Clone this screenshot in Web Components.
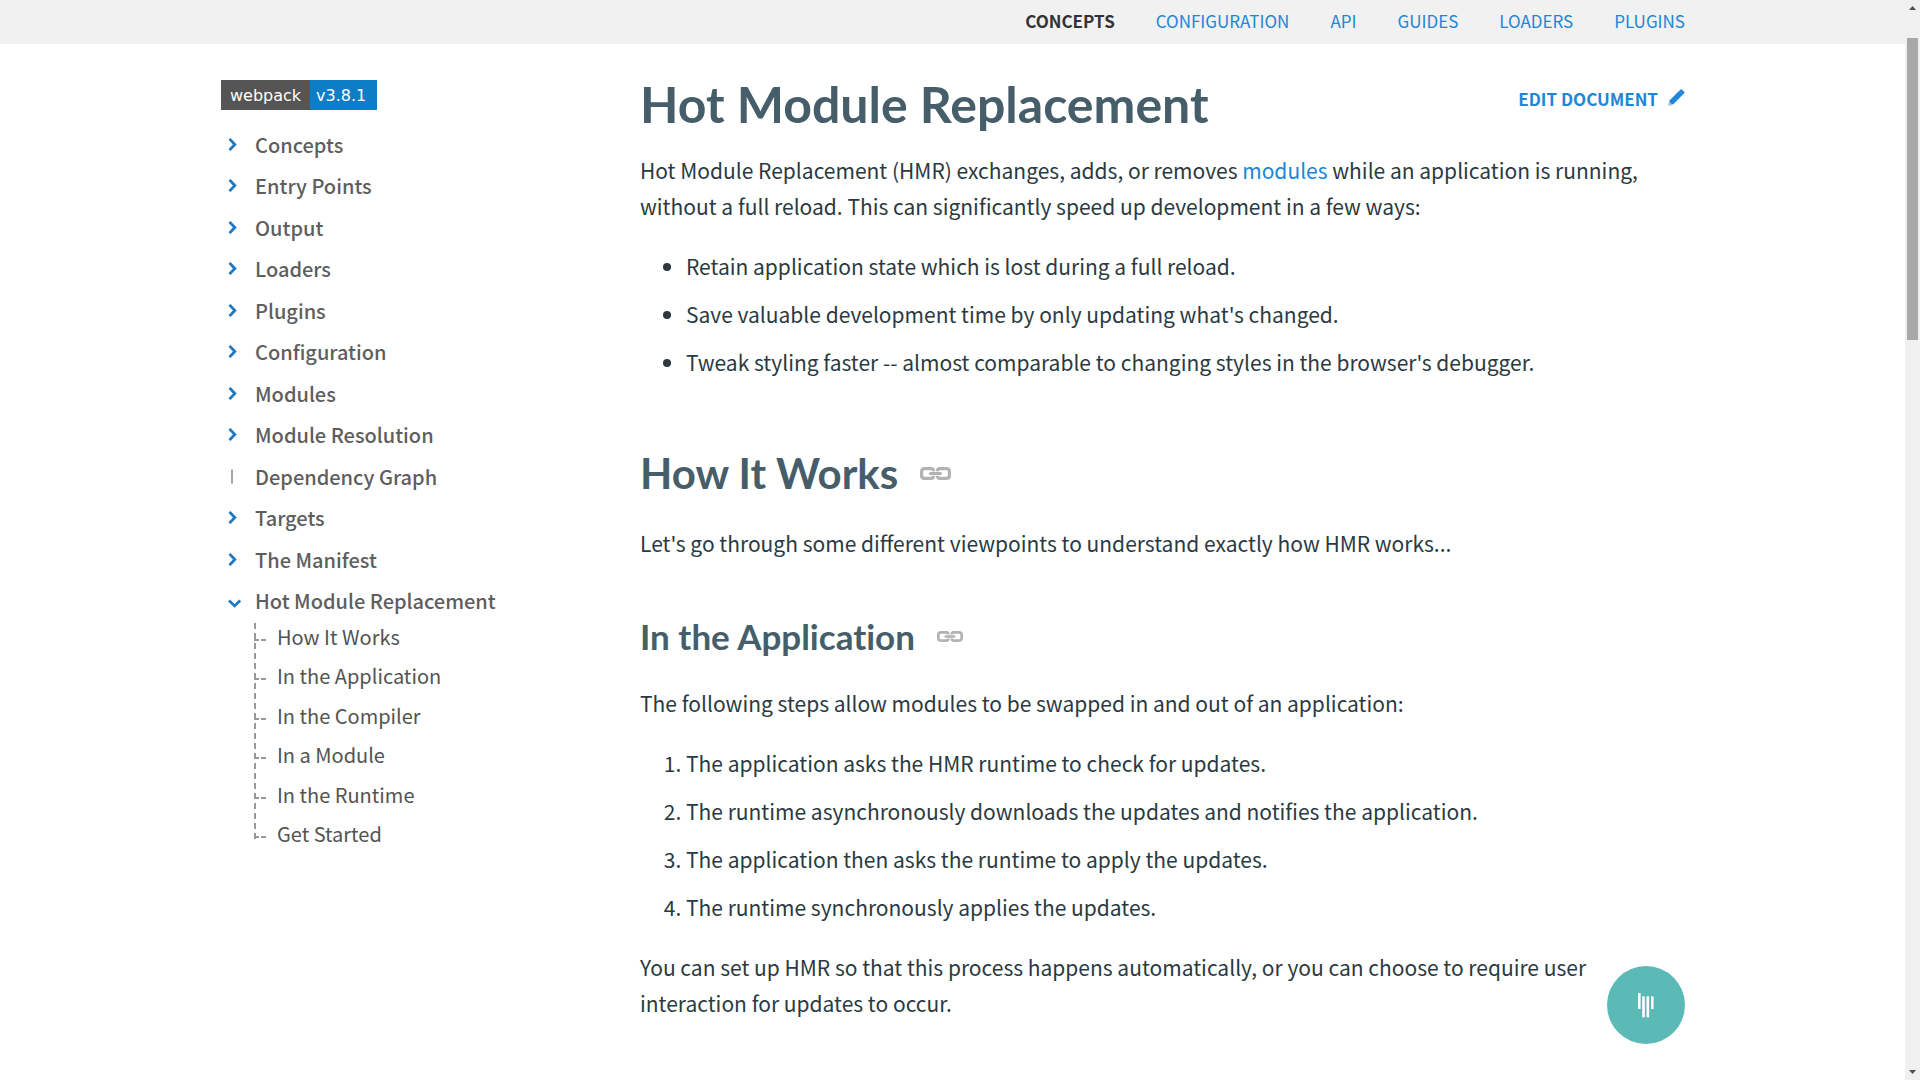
<!DOCTYPE html>
<html lang="en">
<head>
<meta charset="utf-8">
<title>Hot Module Replacement</title>
<style>
  html, body { margin: 0; }
  body {
    font: 400 21px/36px "Noto Sans CJK SC", "Open Sans", sans-serif;
    color: #2b3a42;
    background: #fff;
  }
</style>
</head>
<body>
<docs-page></docs-page>

<script>
const define = (name, html, setup) => {
  const template = document.createElement('template');
  template.innerHTML = html;
  customElements.define(name, class extends HTMLElement {
    connectedCallback() {
      if (this.shadowRoot) return;
      const root = this.attachShadow({ mode: 'open' });
      root.append(template.content.cloneNode(true));
      if (setup) setup(this, root);
    }
  });
};

define('site-nav', `
  <style>
    :host { display: block; background: #f1f1f1; }
    nav {
      display: flex; justify-content: flex-end; gap: 41px;
      max-width: 1465px; margin: 0 auto; padding-bottom: 2px;
      font-size: 17px; line-height: 42px; text-transform: uppercase;
    }
    a { color: #2086d7; text-decoration: none; }
    a[aria-current] { color: #333; font-weight: 600; }
  </style>
  <nav aria-label="Sections">
    <a href="#concepts" aria-current="page">Concepts</a>
    <a href="#configuration">Configuration</a>
    <a href="#api">API</a>
    <a href="#guides">Guides</a>
    <a href="#loaders">Loaders</a>
    <a href="#plugins">Plugins</a>
  </nav>`);

define('version-badge', `
  <style>
    :host { display: flex; height: 30px; font: 16px/32px "DejaVu Sans", sans-serif; color: #fff; }
    .name { box-sizing: border-box; width: 89px; padding-left: 9px; background: #555; }
    .version { box-sizing: border-box; width: 67px; padding-left: 6px; background: #0f7dc6; }
  </style>
  <span class="name"><slot name="name"></slot></span>
  <span class="version"><slot></slot></span>`);

define('toggle-mark', `
  <style>
    :host { display: block; width: 34px; height: 41px; }
    svg { display: block; width: 33px; height: 41px; fill: none; }
    .arrow { stroke: #1d78c1; stroke-width: 2.8; }
    .bar { stroke: #999; stroke-width: 1.8; }
    path { display: none; }
    :host([kind="closed"]) .closed, :host([kind="open"]) .open, :host([kind="none"]) .bar { display: inline; }
  </style>
  <svg viewBox="0 0 33 41" aria-hidden="true">
    <path class="arrow closed" d="M8.5 14.9 L13.8 20.5 L8.5 26.1"/>
    <path class="arrow open" d="M8 20.6 L13.6 25.9 L19.2 20.6"/>
    <path class="bar" d="M11 13.5 V27.5"/>
  </svg>`);

define('side-nav', `
  <style>
    :host { display: block; padding: 36px 0 0 1px; }
    ul { list-style: none; margin: 0; padding: 0; }
    a { color: inherit; text-decoration: none; }
    .tree { margin-top: 14px; font-size: 20px; }
    .tree > li:nth-child(even) > .row { padding-bottom: 1px; }
    .row { display: flex; line-height: 41px; font-weight: 500; color: #5e5e5e; }
    .anchors { position: relative; margin: 1px 0 0 33px; padding-left: 23px; line-height: 28px; color: #535353; }
    .anchors::before {
      content: ""; position: absolute; left: 0; top: 0; bottom: 9px;
      border-left: 2px dashed #999;
    }
    .anchors li { position: relative; margin-bottom: 11px; }
    .anchors li:nth-child(even) { margin-bottom: 12px; }
    .anchors li:last-child { margin-bottom: 0; }
    .anchors li::before {
      content: ""; position: absolute; left: -23px; top: 16px; width: 12px; height: 2px;
      background: repeating-linear-gradient(90deg, #999 0 5px, transparent 5px 7px);
    }
  </style>
  <version-badge><span slot="name">webpack</span>v3.8.1</version-badge>
  <nav aria-label="Concepts"><ul class="tree"></ul></nav>`,
  (host, root) => {
    const tree = root.querySelector('.tree');
    const pages = ['Concepts', 'Entry Points', 'Output', 'Loaders', 'Plugins', 'Configuration', 'Modules',
      'Module Resolution', 'Dependency Graph', 'Targets', 'The Manifest', 'Hot Module Replacement'];
    const anchors = ['How It Works', 'In the Application', 'In the Compiler', 'In a Module', 'In the Runtime', 'Get Started'];
    const slug = text => '#' + text.toLowerCase().replaceAll(' ', '-');
    const link = text => `<a href="${slug(text)}">${text}</a>`;
    tree.innerHTML = pages.map(page => {
      const open = page === 'Hot Module Replacement';
      const kind = open ? 'open' : page === 'Dependency Graph' ? 'none' : 'closed';
      return `<li><div class="row"><toggle-mark kind="${kind}"></toggle-mark>${link(page)}</div>` +
        (open ? `<ul class="anchors">${anchors.map(a => `<li>${link(a)}</li>`).join('')}</ul>` : '') + '</li>';
    }).join('');
  });

define('anchor-icon', `
  <style>
    :host { display: block; width: 31px; height: 13px; }
    :host([small]) { width: 26px; height: 11px; }
    svg { display: block; width: 100%; height: 100%; fill: none; stroke: #b3b3b3; stroke-width: 3.2; }
  </style>
  <svg viewBox="0 0 31 13" aria-hidden="true">
    <path d="M13.5 4.2 V4 Q13.5 1.6 11 1.6 H4.6 Q1.6 1.6 1.6 4.6 V8.4 Q1.6 11.4 4.6 11.4 H11 Q13.5 11.4 13.5 9 V8.8"/>
    <path d="M17.5 4.2 V4 Q17.5 1.6 20 1.6 H26.4 Q29.4 1.6 29.4 4.6 V8.4 Q29.4 11.4 26.4 11.4 H20 Q17.5 11.4 17.5 9 V8.8"/>
    <path d="M10.5 6.5 H20.5" stroke-linecap="round"/>
  </svg>`);

define('doc-article', `
  <style>
    :host { display: block; padding-top: 30px; }
    h1, h2, h3, p, ul, ol { margin: 0; }
    h1, h2, h3 {
      font-family: Lato, "Open Sans", sans-serif; font-weight: 700;
      font-variant-ligatures: none; color: #465e69;
    }
    header { display: flex; justify-content: space-between; margin-bottom: 18px; }
    h1 { font-size: 50px; line-height: 60px; }
    h2 { display: flex; align-items: center; gap: 22px; margin: 67px 0 26px; font-size: 42px; line-height: 52px; }
    h3 { display: flex; align-items: center; gap: 22px; margin: 54px 0 28px; font-size: 35px; line-height: 42px; }
    a { color: #2086d7; text-decoration: none; }
    .edit {
      display: flex; align-items: center; gap: 10px; align-self: flex-start; margin-top: 4px;
      font-size: 17px; font-weight: 600; line-height: 42px; text-transform: uppercase;
    }
    .edit svg { width: 17px; height: 17px; margin-bottom: 4px; fill: #2086d7; }
    ul, ol { padding-left: 46px; margin: 24px 0; }
    li + li { margin-top: 12px; }
  </style>
  <header>
    <h1>Hot Module Replacement</h1>
    <a class="edit" href="#edit">Edit Document
      <svg viewBox="0 0 17 17" aria-hidden="true">
        <path d="M11.2 1.8 L12.6 0.5 Q13.2 0 13.8 0.5 L16.3 3 Q16.9 3.6 16.3 4.2 L15 5.5 Z"/>
        <path d="M11.2 1.8 L15 5.5 L5.3 15.3 L3.6 15.6 L1.4 13.4 L1.5 11.5 Z"/>
        <path d="M1 12.3 L4.5 15.9 L0.2 16.8 Z" fill="#8fc3ec"/>
      </svg>
    </a>
  </header>
  <p>Hot Module Replacement (HMR) exchanges, adds, or removes <a href="#modules">modules</a> while an application is running, without a full reload. This can significantly speed up development in a few ways:</p>
  <ul>
    <li>Retain application state which is lost during a full reload.</li>
    <li>Save valuable development time by only updating what's changed.</li>
    <li>Tweak styling faster -- almost comparable to changing styles in the browser's debugger.</li>
  </ul>
  <h2>How It Works <a href="#how-it-works" aria-label="Link to How It Works"><anchor-icon></anchor-icon></a></h2>
  <p>Let's go through some different viewpoints to understand exactly how HMR works...</p>
  <h3>In the Application <a href="#in-the-application" aria-label="Link to In the Application"><anchor-icon small></anchor-icon></a></h3>
  <p>The following steps allow modules to be swapped in and out of an application:</p>
  <ol>
    <li>The application asks the HMR runtime to check for updates.</li>
    <li>The runtime asynchronously downloads the updates and notifies the application.</li>
    <li>The application then asks the runtime to apply the updates.</li>
    <li>The runtime synchronously applies the updates.</li>
  </ol>
  <p>You can set up HMR so that this process happens automatically, or you can choose to require user interaction for updates to occur.</p>`);

define('chat-button', `
  <style>
    :host { position: fixed; right: 235px; bottom: 36px; }
    button {
      display: grid; place-items: center; width: 78px; height: 78px; padding: 0;
      border: 0; border-radius: 50%; background: #5bb9b6; cursor: pointer;
    }
    svg { width: 16px; height: 25px; fill: #fff; }
  </style>
  <button type="button" aria-label="Open chat">
    <svg viewBox="0 0 16 25" aria-hidden="true">
      <rect x="0" y="0" width="2.6" height="16"/>
      <rect x="4.2" y="3.3" width="2.6" height="21"/>
      <rect x="8.5" y="3.3" width="2.6" height="21"/>
      <rect x="13" y="3.3" width="2.6" height="12.7"/>
    </svg>
  </button>`);

define('scroll-rail', `
  <style>
    :host { display: flex; flex-direction: column; box-sizing: border-box; height: 100vh; padding: 6px 2px 4px; background: #f0f0f0; }
    .thumb { width: 11px; height: 28vh; margin-top: 28px; background: #a8a8a8; }
    svg { display: block; width: 11px; height: 4px; fill: #505050; }
    .down { margin-top: auto; margin-bottom: 2px; }
  </style>
  <svg viewBox="0 0 11 4"><path d="M2 4 L5.5 0 L9 4 Z"/></svg>
  <div class="thumb"></div>
  <svg class="down" viewBox="0 0 11 4"><path d="M2 0 L5.5 4 L9 0 Z"/></svg>`);

define('docs-page', `
  <style>
    :host { display: grid; grid-template-columns: 1fr 15px; height: 100vh; overflow: hidden; }
    .view { min-width: 0; overflow: hidden; }
    .columns { display: grid; grid-template-columns: 420px 1fr; max-width: 1465px; margin: 0 auto; }
  </style>
  <div class="view">
    <site-nav></site-nav>
    <div class="columns">
      <side-nav></side-nav>
      <main><doc-article></doc-article></main>
    </div>
  </div>
  <scroll-rail></scroll-rail>
  <chat-button></chat-button>`);
</script>
</body>
</html>
